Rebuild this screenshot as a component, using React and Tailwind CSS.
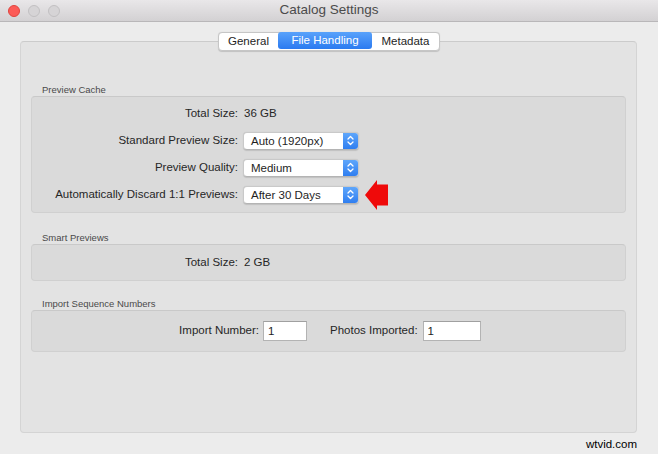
import { useState } from 'react'

const font = { fontFamily: '"Liberation Sans", Arial, sans-serif' }

function TrafficLight({ color }) {
  const tones = {
    red: 'bg-[#fc5b57] border-[#e0443e]',
    gray: 'bg-[#d6d4d6] border-[#c2c0c2]',
  }
  return <span className={`block w-[12px] h-[12px] rounded-full border ${tones[color]}`} />
}

function Chevrons() {
  return (
    <svg width="7" height="11" viewBox="0 0 7 11" fill="none">
      <path d="M1 4 L3.5 1.5 L6 4" stroke="white" strokeWidth="1.3" strokeLinecap="round" strokeLinejoin="round" />
      <path d="M1 7 L3.5 9.5 L6 7" stroke="white" strokeWidth="1.3" strokeLinecap="round" strokeLinejoin="round" />
    </svg>
  )
}

function PopUp({ value }) {
  return (
    <div className="-ml-[1px] flex w-[116px] h-[18px] rounded-[4px] bg-white border border-[#c9c9c9] border-b-[#b4b4b4] shadow-[0_0.5px_1px_rgba(0,0,0,0.12)] overflow-hidden">
      <span className="flex-1 pl-[7px] leading-[16px] text-[#1e1e1e]">{value}</span>
      <span className="w-[15px] flex items-center justify-center bg-gradient-to-b from-[#5ea6fb] to-[#2f7ef0]">
        <Chevrons />
      </span>
    </div>
  )
}

function Field({ value, width }) {
  return (
    <div className={`${width} h-[20px] bg-white border border-[#b3b3b3] border-t-[#a0a0a0] pl-[4px] leading-[18px] text-[#1e1e1e]`}>
      {value}
    </div>
  )
}

function Row({ label, children }) {
  return (
    <div className="flex items-center h-[27px]">
      <span className="w-[206px] text-right text-[#262626]">{label}</span>
      <span className="ml-[6px] flex items-center text-[#262626]">{children}</span>
    </div>
  )
}

function Group({ title, boxClass, children }) {
  return (
    <div>
      <div className="h-[12px] pl-[11px] text-[9.5px] leading-[12px] text-[#4a4a4a]">{title}</div>
      <div className={`rounded-[4px] bg-[#dadada] border border-[#d0d0d0] border-t-[#c9c9c9] ${boxClass}`}>
        {children}
      </div>
    </div>
  )
}

// small red pointer next to the discard popup
function RedArrow() {
  return (
    <svg width="24" height="32" viewBox="0 0 24 32" className="ml-[6px]">
      <polygon points="0,16 12,1 12,5.5 23,5.5 23,26.5 12,26.5 12,31" fill="#ef0a0a" />
    </svg>
  )
}

export default function App() {
  const [tab, setTab] = useState('File Handling')
  const tabs = [
    { name: 'General', w: 'w-[59px]' },
    { name: 'File Handling', w: 'w-[94px]' },
    { name: 'Metadata', w: 'w-[67px]' },
  ]

  return (
    <div className="w-[658px] h-[454px] flex flex-col bg-[#ececec] text-[11.5px] overflow-hidden" style={font}>
      {/* title bar */}
      <div className="relative h-[22px] flex items-center bg-gradient-to-b from-[#e9e7e9] to-[#d3d1d3] border-b border-[#b9b7b9]">
        <div className="flex items-center gap-[8px] pl-[8px] pt-[1px]">
          <TrafficLight color="red" />
          <TrafficLight color="gray" />
          <TrafficLight color="gray" />
        </div>
        <div className="absolute inset-0 flex items-center justify-center text-[13.5px] text-[#4b4b4b]">Catalog Settings</div>
      </div>

      <div className="flex-1 flex flex-col pt-[10px]">
        {/* segmented tab control */}
        <div className="relative z-10 flex justify-center -mb-[10px]">
          <div className="flex h-[19px] rounded-[4px] bg-white border border-[#c6c6c6] shadow-[0_0.5px_1px_rgba(0,0,0,0.15)]">
            {tabs.map((t) => (
              <button
                key={t.name}
                onClick={() => setTab(t.name)}
                className={`${t.w} h-full flex items-center justify-center leading-none ${
                  tab === t.name
                    ? 'bg-gradient-to-b from-[#59a2fb] to-[#2a7af0] text-white rounded-[3px] -my-[1px] h-[19px]'
                    : 'text-[#1e1e1e]'
                }`}
              >
                {t.name}
              </button>
            ))}
          </div>
        </div>

        {/* tab panel */}
        <div className="mx-[20px] mr-[21px] h-[392px] rounded-[4px] bg-[#e3e3e3] border border-[#d4d4d4] border-t-[#cbcbcb] px-[10px] pt-[42px]">
          <Group title="Preview Cache" boxClass="pt-[3px] pb-[4px]">
            <Row label="Total Size:">36 GB</Row>
            <Row label="Standard Preview Size:">
              <PopUp value="Auto (1920px)" />
            </Row>
            <Row label="Preview Quality:">
              <PopUp value="Medium" />
            </Row>
            <Row label="Automatically Discard 1:1 Previews:">
              <PopUp value="After 30 Days" />
              <RedArrow />
            </Row>
          </Group>

          <div className="mt-[19px]">
            <Group title="Smart Previews" boxClass="h-[37px] pt-[4px]">
              <Row label="Total Size:">2 GB</Row>
            </Group>
          </div>

          <div className="mt-[17px]">
            <Group title="Import Sequence Numbers" boxClass="h-[42px] flex items-center">
              <div className="flex items-center text-[#262626]">
                <span className="w-[227px] text-right">Import Number:</span>
                <span className="ml-[4px]">
                  <Field value="1" width="w-[44px]" />
                </span>
                <span className="ml-[23px]">Photos Imported:</span>
                <span className="ml-[5px]">
                  <Field value="1" width="w-[58px]" />
                </span>
              </div>
            </Group>
          </div>
        </div>

        <div className="flex-1 flex items-center justify-end pr-[21px] pt-[2px] text-[11.5px] text-black">wtvid.com</div>
      </div>
    </div>
  )
}
